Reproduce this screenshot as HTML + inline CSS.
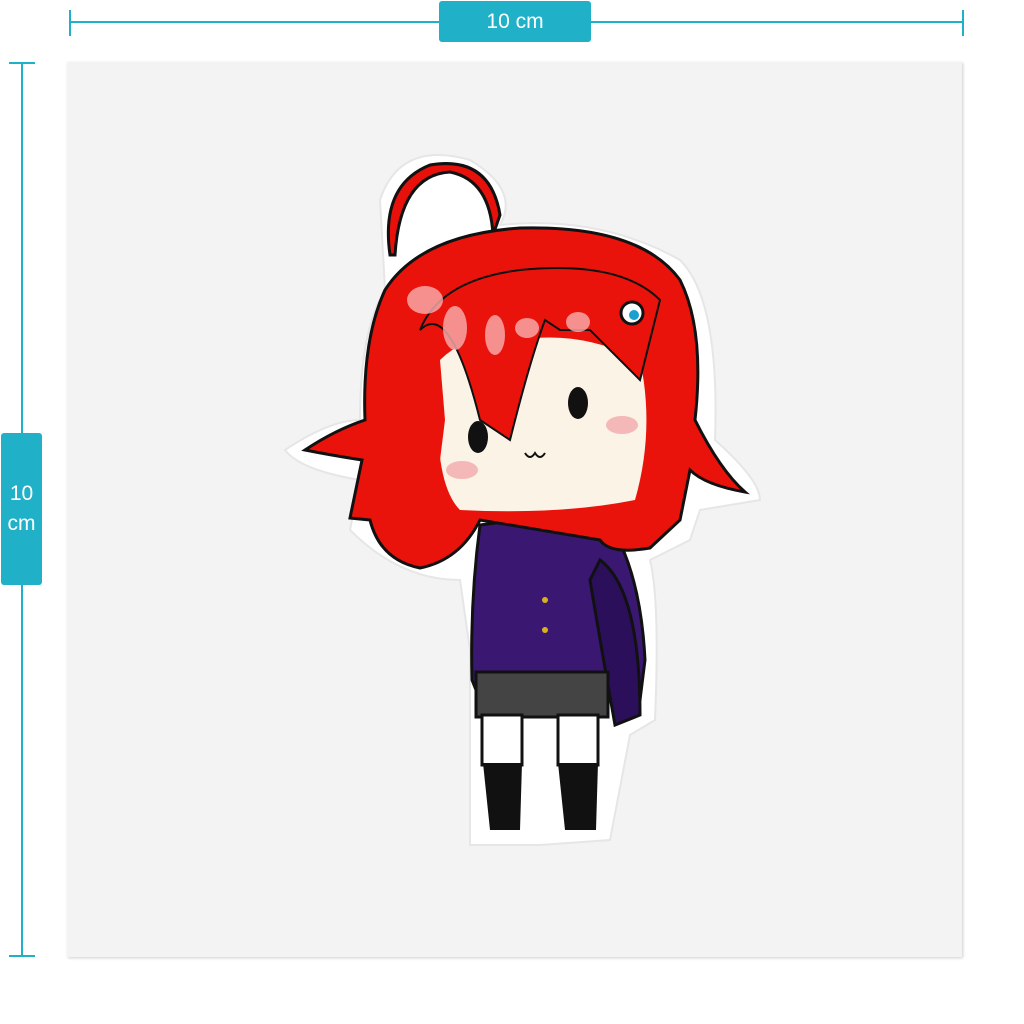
<!DOCTYPE html>
<html><head><style>
body{margin:0;width:1024px;height:1024px;background:#fff;position:relative;overflow:hidden;font-family:"Liberation Sans",sans-serif}
.t{position:absolute;background:#20b1c9}
.lab{position:absolute;background:#20b1c9;color:#fff;border-radius:3px;display:flex;align-items:center;justify-content:center;text-align:center;font-size:21px;line-height:30px}
</style></head><body>
<div class="t" style="left:70px;top:21px;width:894px;height:2px"></div>
<div class="t" style="left:69px;top:10px;width:2px;height:26px"></div>
<div class="t" style="left:962px;top:10px;width:2px;height:26px"></div>
<div class="lab" style="left:439px;top:1px;width:152px;height:41px">10 cm</div>
<div class="t" style="left:21px;top:63px;width:2px;height:894px"></div>
<div class="t" style="left:9px;top:62px;width:26px;height:2px"></div>
<div class="t" style="left:9px;top:955px;width:26px;height:2px"></div>
<div class="lab" style="left:1px;top:433px;width:41px;height:152px">10<br>cm</div>
<div style="position:absolute;left:67px;top:62px;width:895px;height:895px;background:#f3f3f3;box-shadow:1px 1px 3px rgba(0,0,0,.2)"></div>
<svg style="position:absolute;left:0;top:0" width="1024" height="1024" viewBox="0 0 1024 1024">
<path d="M380 200 Q400 140 470 160 Q520 190 500 225 Q600 215 680 260 Q720 300 715 440 Q760 480 760 500 L700 510 L690 540 L650 560 Q660 600 655 720 L630 735 L610 840 L540 845 L470 845 L470 650 L460 580 Q400 580 350 530 L360 480 Q300 470 285 450 Q330 420 360 420 Q360 330 385 290 Z" fill="#fff" stroke="#e6e6e6" stroke-width="2"/>
<path d="M390 255 Q380 185 430 165 Q490 155 500 215 L493 235 Q490 180 450 172 Q400 175 395 255 Z" fill="#e8100a" stroke="#111" stroke-width="3"/>
<path d="M480 525 Q470 600 472 680 L480 700 L640 700 L645 660 Q640 560 600 510 Z" fill="#3a1770" stroke="#111" stroke-width="3"/>
<path d="M600 560 Q640 590 640 715 L615 725 Q600 640 590 580 Z" fill="#2c0f5a" stroke="#111" stroke-width="3"/>
<rect x="476" y="672" width="132" height="45" fill="#444" stroke="#111" stroke-width="3"/>
<rect x="482" y="715" width="40" height="50" fill="#fff" stroke="#111" stroke-width="3"/>
<rect x="558" y="715" width="40" height="50" fill="#fff" stroke="#111" stroke-width="3"/>
<path d="M483 763 L522 763 L520 830 L490 830 Z M558 763 L598 763 L596 830 L565 830 Z" fill="#111"/>
<path d="M385 290 Q420 235 520 228 Q640 225 680 280 Q705 330 695 420 Q720 470 745 492 Q705 485 690 470 L680 520 L650 548 Q610 555 600 540 L480 520 Q460 560 420 568 Q380 560 370 520 L350 518 L362 460 Q330 455 305 450 Q335 430 365 420 Q362 340 385 290 Z" fill="#ea130c" stroke="#111" stroke-width="3"/>
<path d="M440 360 Q470 330 520 340 Q580 330 640 360 Q655 430 635 500 Q560 515 460 510 Q430 480 440 360 Z" fill="#fbf3e5"/>
<path d="M420 330 Q450 300 480 420 L510 440 Q530 360 545 320 L560 330 L590 330 L640 380 L660 300 Q620 260 520 270 Q440 280 420 330 Z" fill="#ea130c" stroke="#111" stroke-width="2"/>
<path d="M440 360 Q420 420 435 500 L445 420 Z" fill="#ea130c"/>
<ellipse cx="478" cy="437" rx="10" ry="16" fill="#111"/>
<ellipse cx="578" cy="403" rx="10" ry="16" fill="#111"/>
<ellipse cx="462" cy="470" rx="16" ry="9" fill="#f4b8b8"/>
<ellipse cx="622" cy="425" rx="16" ry="9" fill="#f4b8b8"/>
<path d="M525 453 q5 8 10 0 q5 8 10 0" fill="none" stroke="#111" stroke-width="2"/>
<ellipse cx="425" cy="300" rx="18" ry="14" fill="#f8b0b0" opacity=".8"/>
<ellipse cx="455" cy="328" rx="12" ry="22" fill="#f8b0b0" opacity=".8"/>
<ellipse cx="495" cy="335" rx="10" ry="20" fill="#f8b0b0" opacity=".8"/>
<ellipse cx="527" cy="328" rx="12" ry="10" fill="#f8b0b0" opacity=".8"/>
<ellipse cx="578" cy="322" rx="12" ry="10" fill="#f8b0b0" opacity=".8"/>
<circle cx="632" cy="313" r="11" fill="#fff" stroke="#111" stroke-width="3"/>
<circle cx="634" cy="315" r="5" fill="#1aa0d0"/>
<circle cx="545" cy="600" r="3" fill="#d8b020"/><circle cx="545" cy="630" r="3" fill="#d8b020"/>
</svg>
</body></html>
